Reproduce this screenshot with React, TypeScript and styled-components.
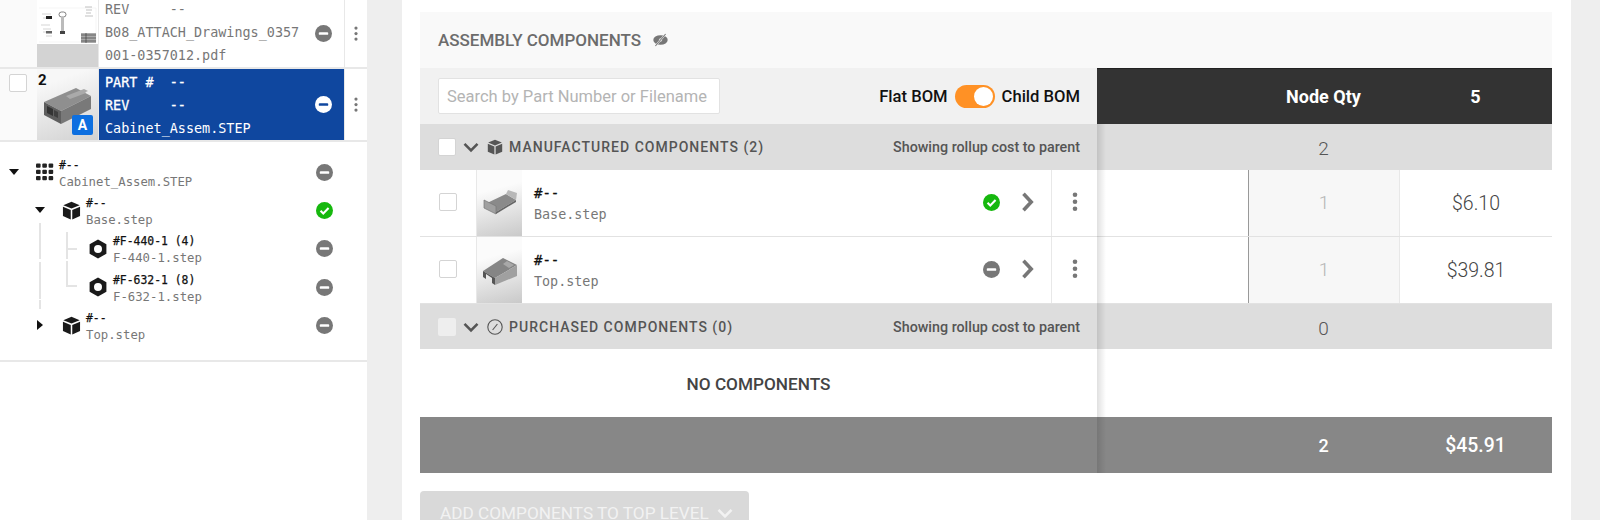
import React from "react";
import styled, { createGlobalStyle } from "styled-components";

const GlobalStyle = createGlobalStyle`
  html, body { margin: 0; padding: 0; background: #eeeeee; }
  body { font-family: "Roboto", "Liberation Sans", sans-serif; }
  * { box-sizing: border-box; }
`;

const MinusIcon = ({ size = 17, inverse = false }: { size?: number; inverse?: boolean }) => (
  <svg width={size} height={size} viewBox="0 0 18 18">
    <circle cx="9" cy="9" r="9" fill={inverse ? "#fff" : "#777"} />
    <rect x="4" y="7.6" width="10" height="2.8" rx="1" fill={inverse ? "#0f479f" : "#fff"} />
  </svg>
);

const CheckIcon = ({ size = 17 }: { size?: number }) => (
  <svg width={size} height={size} viewBox="0 0 18 18">
    <circle cx="9" cy="9" r="9" fill="#16b80e" />
    <path d="M4.8 9.2l2.9 2.9 5.6-5.8" fill="none" stroke="#fff" strokeWidth="2.2" />
  </svg>
);

const Kebab = ({ r = 1.7, gap = 6 }: { r?: number; gap?: number }) => (
  <svg width="8" height={gap * 2 + r * 2 + 1} viewBox={`0 0 8 ${gap * 2 + r * 2 + 1}`}>
    {[0, 1, 2].map((i) => (
      <circle key={i} cx="4" cy={r + 0.5 + i * gap} r={r} fill="#777" />
    ))}
  </svg>
);

const Caret = ({ right = false }: { right?: boolean }) => (
  <svg width="12" height="12" viewBox="0 0 12 12">
    <path d={right ? "M3 1l6 5-6 5z" : "M1 3h10l-5 6z"} fill="#111" />
  </svg>
);

const GridIcon = () => (
  <svg width="18" height="18" viewBox="0 0 18 18" fill="#222">
    {[0, 1, 2].flatMap((r) =>
      [0, 1, 2].map((c) => <rect key={`${r}${c}`} x={c * 6.3} y={r * 6.3 + 0.5} width="4.6" height="4.2" rx="1" />)
    )}
  </svg>
);

const CubeIcon = ({ size = 19, color = "#1a1a1a" }: { size?: number; color?: string }) => (
  <svg width={size} height={size} viewBox="0 0 20 20" fill={color}>
    <path d="M10 .8l8.6 3.6L10 8 1.4 4.4z" />
    <path d="M1 6l8.2 3.5V19.4L1 15.8z" />
    <path d="M19 6l-8.2 3.5V19.4L19 15.8z" />
  </svg>
);

const HexIcon = () => (
  <svg width="18" height="20" viewBox="0 0 18 20">
    <path
      fillRule="evenodd"
      d="M9 .5l8.4 4.8v9.4L9 19.5.6 14.7V5.3zM9 6a4 4 0 100 8 4 4 0 000-8z"
      fill="#1a1a1a"
    />
  </svg>
);

const EyeOff = () => (
  <svg width="15" height="14" viewBox="0 0 15 14">
    <ellipse cx="7.5" cy="7" rx="7.2" ry="4.8" fill="#777" />
    <circle cx="7.5" cy="7" r="1.7" fill="#cfcfcf" />
    <path d="M12.6 1L2.4 13" stroke="#f9f9f9" strokeWidth="1.9" />
    <path d="M12.6 1L2.4 13" stroke="#777" strokeWidth="1.1" />
  </svg>
);

const ChevronDown = ({ color = "#555" }: { color?: string }) => (
  <svg width="16" height="11" viewBox="0 0 16 11">
    <path d="M1.5 1.8L8 8.3l6.5-6.5" fill="none" stroke={color} strokeWidth="2.6" />
  </svg>
);

const ChevronRight = () => (
  <svg width="13" height="20" viewBox="0 0 13 20">
    <path d="M2.5 1.8L10.2 10l-7.7 8.2" fill="none" stroke="#777" strokeWidth="3.6" />
  </svg>
);

const DialIcon = () => (
  <svg width="16" height="16" viewBox="0 0 16 16">
    <circle cx="8" cy="8" r="7.2" fill="none" stroke="#555" strokeWidth="1.1" />
    <path d="M5.6 11l4.8-6" stroke="#555" strokeWidth="1.1" />
  </svg>
);

const BasePart = () => (
  <svg width="40" height="38" viewBox="0 0 40 38">
    <path d="M5 20L26 10l10 6-20 12z" fill="#8a8a8a" />
    <path d="M26 10l2-4 9 3-1 7z" fill="#b8b8b8" />
    <path d="M4 16l12 6v8L4 24z" fill="#a0a0a0" stroke="#777" strokeWidth=".7" />
    <path d="M16 28l20-12v2L16 30z" fill="#666" />
  </svg>
);

const TopPart = () => (
  <svg width="40" height="38" viewBox="0 0 40 38">
    <path d="M3 20L23 7l14 7-22 13z" fill="#858585" />
    <path d="M27 10l7 4-5 3-6-4z" fill="#a8a8a8" />
    <path d="M15 27l22-13v11L15 34z" fill="#a0a0a0" />
    <path d="M3 20l12 7v7l-3-2v-5l-6-4v5l-3-2z" fill="#555" />
  </svg>
);

const CabinetPart = () => (
  <svg width="50" height="38" viewBox="0 0 50 38">
    <path d="M1 15L33 1l15 8-30 15z" fill="#8f8f8f" />
    <path d="M23 9l18-7 4 2-18 8zM26 11l16-6 1 1-16 6z" fill="#aaa" />
    <path d="M1 15l17 9v13L1 28z" fill="#5e5e5e" />
    <path d="M18 24L48 9v13L18 37z" fill="#797979" />
    <path d="M4 19l6 3v7l-6-3z" fill="#333" />
    <path d="M11 23l4 2v6l-4-2z" fill="#3f3f3f" />
  </svg>
);

const DrawingSheet = () => (
  <svg width="60" height="42" viewBox="0 0 60 42">
    <g fill="none" strokeWidth=".6">
      <path d="M2 6h57v34H2" stroke="#eee" />
      <path d="M5 12h9M6 16h7M4 23h9M6 27h8M9 34h6M6 30h4" stroke="#bbb" />
      <rect x="9" y="14" width="6" height="3" fill="#222" stroke="none" />
      <rect x="9" y="29" width="6" height="2.5" fill="#666" stroke="none" />
      <rect x="22" y="10" width="7" height="5" rx="2.5" stroke="#333" />
      <path d="M25.5 15v15" stroke="#bbb" strokeWidth="3" />
      <rect x="23" y="29" width="5" height="3" fill="#444" stroke="none" />
      <path d="M48 5h7M49 8h6M49 11h5M48 14h8" stroke="#999" />
      <rect x="44" y="31" width="15" height="10" fill="#aaa" stroke="none" />
      <path d="M44 33h15M44 36h15M44 39h15M49 31v10" stroke="#333" />
    </g>
  </svg>
);

const Page = styled.div`
  display: flex;
  height: 520px;
  width: 1600px;
  overflow: hidden;
  background: #eeeeee;
`;

const LeftPanel = styled.aside`
  width: 367px;
  flex: none;
  height: 100%;
  background: #fff;
`;

const FileRow = styled.div<{ $height: number }>`
  display: flex;
  height: ${(p) => p.$height}px;
  border-bottom: 2px solid #e8e8e8;
`;

const CheckCell = styled.div`
  width: 37px;
  flex: none;
  background: #fafafa;
  padding: 5px 0 0 9px;
`;

const Box = styled.span<{ $disabled?: boolean }>`
  display: block;
  flex: none;
  width: 18px;
  height: 18px;
  background: ${(p) => (p.$disabled ? "#eeeeee" : "#fff")};
  border: ${(p) => (p.$disabled ? "none" : "1px solid #d4d4d4")};
  border-radius: 2px;
`;

const ThumbCell = styled.div`
  width: 61px;
  flex: none;
  position: relative;
  background: linear-gradient(160deg, #f7f7f7 20%, #d2d2d2 100%);
  display: flex;
  flex-direction: column;
`;

const SheetTop = styled.div`
  height: 44px;
  background: #fff;
  overflow: hidden;
  display: flex;
  align-items: flex-end;
`;

const SheetRest = styled.div`
  flex: 1;
  background: #d3d3d3;
`;

const RowNumber = styled.span`
  position: absolute;
  left: 1px;
  top: 2px;
  font: 700 15px "Roboto", sans-serif;
  color: #111;
`;

const ThumbPart = styled.div`
  padding: 18px 0 0 6px;
`;

const RevBadge = styled.span`
  position: absolute;
  right: 5px;
  bottom: 5px;
  width: 21px;
  height: 20px;
  border-radius: 2px;
  background: #0d6fe0;
  color: #fff;
  font: 700 14px/20px "Roboto", sans-serif;
  text-align: center;
`;

const InfoCell = styled.div<{ $active?: boolean }>`
  width: 246px;
  flex: none;
  display: flex;
  align-items: center;
  justify-content: space-between;
  padding: 0 12px 0 6px;
  background: ${(p) => (p.$active ? "#0f479f" : "#fff")};
  color: ${(p) => (p.$active ? "#fff" : "#777")};
  border-left: 1px solid #e8e8e8;
`;

const MonoLines = styled.div<{ $shift?: number }>`
  font-family: "DejaVu Sans Mono", "Liberation Mono", monospace;
  font-size: 13.45px;
  line-height: 22.7px;
  white-space: pre;
  padding-top: ${(p) => p.$shift ?? 0}px;
`;

const MonoStrong = styled.div`
  -webkit-text-stroke: 0.3px currentColor;
`;

const KebabCell = styled.div`
  flex: 1;
  display: flex;
  align-items: center;
  justify-content: center;
  border-left: 1px solid #e8e8e8;
`;

const Tree = styled.div`
  padding: 11px 0 0;
  height: 220px;
  border-bottom: 2px solid #e8e8e8;
`;

const TreeRow = styled.div<{ $depth: number }>`
  position: relative;
  display: flex;
  align-items: center;
  height: 38.3px;
  padding-left: ${(p) => [8, 34, 89][p.$depth]}px;
  padding-right: 34px;
`;

const CaretSlot = styled.span`
  width: 12px;
  margin-right: 16px;
  display: flex;
  flex: none;
`;

const TreeIcon = styled.span<{ $gap: number }>`
  display: flex;
  flex: none;
  margin-right: ${(p) => p.$gap}px;
`;

const TreeText = styled.div`
  flex: 1;
  padding-top: 3px;
  font-family: "DejaVu Sans Mono", "Liberation Mono", monospace;
  font-size: 12.3px;
  line-height: 17px;
  color: #777;
  white-space: pre;
`;

const TreeTitle = styled.div`
  color: #111;
  font-size: 11.4px;
  -webkit-text-stroke: 0.25px #111;
`;

const Guide = styled.i<{ $x: number; $top: number; $h: number; $w?: number }>`
  position: absolute;
  left: ${(p) => p.$x}px;
  top: ${(p) => p.$top}px;
  height: ${(p) => p.$h}px;
  width: ${(p) => p.$w ?? 2}px;
  background: #e4e4e4;
`;

const Main = styled.main`
  margin-left: 35px;
  width: 1169px;
  height: 100%;
  flex: none;
  background: #fff;
  padding: 12px 19px 0 18px;
`;

const SectionTitle = styled.div`
  height: 56px;
  background: #f9f9f9;
  padding-left: 18px;
  display: flex;
  align-items: center;
  gap: 12px;
  color: #6c6c6c;
  font-size: 17px;
  font-weight: 500;
`;

const Table = styled.div`
  position: relative;
`;

const FrozenShadow = styled.div`
  position: absolute;
  left: 677px;
  top: 56px;
  bottom: 0;
  width: 9px;
  background: linear-gradient(90deg, rgba(0, 0, 0, 0.12), rgba(0, 0, 0, 0));
  pointer-events: none;
`;

const TableRow = styled.div<{ $height: number; $bg?: string; $line?: string }>`
  display: grid;
  grid-template-columns: 677px 151px 151px 1fr;
  height: ${(p) => p.$height}px;
  background: ${(p) => p.$bg ?? "transparent"};
  border-bottom: ${(p) => (p.$line ? `1px solid ${p.$line}` : "none")};
`;

const Toolbar = styled.div`
  background: #f1f1f1;
  display: flex;
  align-items: center;
  padding: 0 17px 0 18px;
`;

const SearchInput = styled.input`
  width: 282px;
  height: 36px;
  border: 1px solid #e2e2e2;
  border-radius: 2px;
  background: #fff;
  padding: 0 8px;
  font: 400 16.5px "Roboto", sans-serif;
  color: #333;
  &::placeholder { color: #b4b4b4; opacity: 1; }
`;

const BomSwitch = styled.div`
  margin-left: auto;
  display: flex;
  align-items: center;
  gap: 7px;
  font-size: 16.6px;
  font-weight: 500;
  color: #111;
`;

const Toggle = styled.span`
  width: 40px;
  height: 23px;
  border-radius: 12px;
  background: #ff9125;
  display: flex;
  justify-content: flex-end;
  padding: 2px;
`;

const Knob = styled.span`
  width: 19px;
  height: 19px;
  border-radius: 50%;
  background: #fff;
`;

const HeadFill = styled.div`
  grid-column: 2 / -1;
  background: #333;
  border-top: 1px solid #222;
  display: grid;
  grid-template-columns: 151px 151px 1fr;
  align-items: center;
`;

const HeadLabel = styled.div<{ $col: number }>`
  grid-column: ${(p) => p.$col};
  text-align: center;
  color: #fff;
  font-size: 18px;
  font-weight: 700;
`;

const GroupLabel = styled.div<{ $shift?: number }>`
  display: flex;
  align-items: center;
  padding: ${(p) => p.$shift ?? 0}px 17px 0 18px;
`;

const GroupChevron = styled.span`
  display: flex;
  margin: 0 8px 0 7px;
`;

const GroupIcon = styled.span`
  display: flex;
  margin-right: 6px;
`;

const GroupName = styled.span`
  font-size: 14px;
  font-weight: 500;
  letter-spacing: 1.02px;
  color: #555;
  white-space: pre;
`;

const GroupNote = styled.span`
  margin-left: auto;
  font-size: 14.3px;
  font-weight: 500;
  color: #555;
`;

const GroupQty = styled.div`
  grid-column: 3;
  text-align: center;
  align-self: center;
  padding-top: 3px;
  font-size: 19px;
  font-weight: 300;
  color: #555;
`;

const PartCell = styled.div`
  display: flex;
  align-items: stretch;
`;

const PartCheck = styled.div`
  width: 56px;
  flex: none;
  display: flex;
  align-items: center;
  padding-left: 19px;
  padding-bottom: 2px;
`;

const PartThumb = styled.div`
  width: 46px;
  flex: none;
  display: flex;
  align-items: center;
  justify-content: center;
  border-left: 1px solid #e8e8e8;
  background: linear-gradient(165deg, #fbfbfb 30%, #c9c9c9 100%);
`;

const PartText = styled.div`
  flex: 1;
  padding: 2px 0 0 12px;
  align-self: center;
  font-family: "DejaVu Sans Mono", "Liberation Mono", monospace;
  font-size: 13.4px;
  line-height: 21.5px;
  color: #777;
`;

const PartTitle = styled.div`
  color: #111;
  font-size: 14px;
  -webkit-text-stroke: 0.3px #111;
`;

const PartStatus = styled.div`
  display: flex;
  align-items: center;
  gap: 21px;
  padding-right: 17px;
  padding-bottom: 2px;
`;

const PartMenu = styled.div`
  width: 46px;
  flex: none;
  display: flex;
  align-items: center;
  justify-content: center;
  padding-bottom: 2px;
  border-left: 1px solid #e8e8e8;
`;

const QtyCell = styled.div`
  grid-column: 3;
  display: flex;
  align-items: center;
  justify-content: center;
  padding-bottom: 2px;
  background: #f7f7f7;
  border-left: 1px solid #999;
  font-size: 19px;
  font-weight: 300;
  color: #b5b5b5;
`;

const PriceCell = styled.div`
  display: flex;
  align-items: center;
  justify-content: center;
  border-left: 1px solid #e8e8e8;
  font-size: 19.5px;
  font-weight: 300;
  color: #444;
`;

const EmptyNote = styled.div`
  display: flex;
  align-items: center;
  justify-content: center;
  padding-top: 1px;
  font-size: 17.2px;
  font-weight: 500;
  color: #444;
`;

const TotalCell = styled.div<{ $col: number; $size: number }>`
  grid-column: ${(p) => p.$col};
  align-self: center;
  text-align: center;
  padding-top: 1px;
  font-size: ${(p) => p.$size}px;
  font-weight: 500;
  color: #fff;
`;

const AddButton = styled.button`
  margin-top: 18px;
  width: 329px;
  height: 46px;
  border: none;
  border-radius: 4px;
  background: #d9d9d9;
  color: #f2f2f2;
  padding: 0 0 0 20px;
  display: flex;
  align-items: flex-start;
  gap: 8px;
  font: 400 17.2px/44px "Roboto", sans-serif;
  white-space: nowrap;
`;

const AddChevron = styled.span`
  display: flex;
  padding-top: 17px;
`;

const parts = [
  { title: "Base.step", art: <BasePart />, status: <CheckIcon />, qty: 1, price: "$6.10" },
  { title: "Top.step", art: <TopPart />, status: <MinusIcon />, qty: 1, price: "$39.81" },
];

const App = () => {
  return (
    <Page>
      <GlobalStyle />
      <LeftPanel>
        <FileRow $height={69}>
          <CheckCell />
          <ThumbCell>
            <SheetTop>
              <DrawingSheet />
            </SheetTop>
            <SheetRest />
          </ThumbCell>
          <InfoCell>
            <MonoLines>
              {"REV     --\nB08_ATTACH_Drawings_0357\n001-0357012.pdf"}
            </MonoLines>
            <MinusIcon />
          </InfoCell>
          <KebabCell>
            <Kebab r={1.6} gap={5.5} />
          </KebabCell>
        </FileRow>
        <FileRow $height={73}>
          <CheckCell>
            <Box />
          </CheckCell>
          <ThumbCell>
            <RowNumber>2</RowNumber>
            <ThumbPart>
              <CabinetPart />
            </ThumbPart>
            <RevBadge>A</RevBadge>
          </ThumbCell>
          <InfoCell $active>
            <MonoLines $shift={4}>
              <MonoStrong>{"PART #  --\nREV     --"}</MonoStrong>
              Cabinet_Assem.STEP
            </MonoLines>
            <MinusIcon inverse />
          </InfoCell>
          <KebabCell>
            <Kebab r={1.6} gap={5.5} />
          </KebabCell>
        </FileRow>
        <Tree>
          <TreeRow $depth={0}>
            <CaretSlot>
              <Caret />
            </CaretSlot>
            <TreeIcon $gap={5}>
              <GridIcon />
            </TreeIcon>
            <TreeText>
              <TreeTitle>#--</TreeTitle>
              Cabinet_Assem.STEP
            </TreeText>
            <MinusIcon />
          </TreeRow>
          <TreeRow $depth={1}>
            <CaretSlot>
              <Caret />
            </CaretSlot>
            <TreeIcon $gap={5}>
              <CubeIcon />
            </TreeIcon>
            <TreeText>
              <TreeTitle>#--</TreeTitle>
              Base.step
            </TreeText>
            <CheckIcon />
            <Guide $x={39} $top={32} $h={36} />
            <Guide $x={39} $top={71} $h={37} />
            <Guide $x={39} $top={109} $h={9} />
          </TreeRow>
          <TreeRow $depth={2}>
            <Guide $x={66} $top={2} $h={27} />
            <Guide $x={66} $top={18} $h={2} $w={11} />
            <TreeIcon $gap={6}>
              <HexIcon />
            </TreeIcon>
            <TreeText>
              <TreeTitle>#F-440-1 (4)</TreeTitle>
              F-440-1.step
            </TreeText>
            <MinusIcon />
          </TreeRow>
          <TreeRow $depth={2}>
            <Guide $x={66} $top={-7} $h={25} />
            <Guide $x={66} $top={17} $h={2} $w={11} />
            <TreeIcon $gap={6}>
              <HexIcon />
            </TreeIcon>
            <TreeText>
              <TreeTitle>#F-632-1 (8)</TreeTitle>
              F-632-1.step
            </TreeText>
            <MinusIcon />
          </TreeRow>
          <TreeRow $depth={1}>
            <CaretSlot>
              <Caret right />
            </CaretSlot>
            <TreeIcon $gap={5}>
              <CubeIcon />
            </TreeIcon>
            <TreeText>
              <TreeTitle>#--</TreeTitle>
              Top.step
            </TreeText>
            <MinusIcon />
          </TreeRow>
        </Tree>
      </LeftPanel>
      <Main>
        <SectionTitle>
          ASSEMBLY COMPONENTS
          <EyeOff />
        </SectionTitle>
        <Table>
          <TableRow $height={56}>
            <Toolbar>
              <SearchInput placeholder="Search by Part Number or Filename" />
              <BomSwitch>
                Flat BOM
                <Toggle>
                  <Knob />
                </Toggle>
                Child BOM
              </BomSwitch>
            </Toolbar>
            <HeadFill>
              <HeadLabel $col={2}>Node Qty</HeadLabel>
              <HeadLabel $col={3}>5</HeadLabel>
            </HeadFill>
          </TableRow>
          <TableRow $height={46} $bg="#dddddd">
            <GroupLabel>
              <Box />
              <GroupChevron>
                <ChevronDown />
              </GroupChevron>
              <GroupIcon>
                <CubeIcon size={16} color="#555" />
              </GroupIcon>
              <GroupName>MANUFACTURED COMPONENTS (2)</GroupName>
              <GroupNote>Showing rollup cost to parent</GroupNote>
            </GroupLabel>
            <GroupQty>2</GroupQty>
          </TableRow>
          {parts.map((part) => (
            <TableRow key={part.title} $height={67} $line="#e2e2e2">
              <PartCell>
                <PartCheck>
                  <Box />
                </PartCheck>
                <PartThumb>{part.art}</PartThumb>
                <PartText>
                  <PartTitle>#--</PartTitle>
                  {part.title}
                </PartText>
                <PartStatus>
                  {part.status}
                  <ChevronRight />
                </PartStatus>
                <PartMenu>
                  <Kebab r={2.3} gap={7} />
                </PartMenu>
              </PartCell>
              <QtyCell>{part.qty}</QtyCell>
              <PriceCell>{part.price}</PriceCell>
            </TableRow>
          ))}
          <TableRow $height={45} $bg="#dddddd">
            <GroupLabel $shift={1}>
              <Box $disabled />
              <GroupChevron>
                <ChevronDown />
              </GroupChevron>
              <GroupIcon>
                <DialIcon />
              </GroupIcon>
              <GroupName>PURCHASED COMPONENTS (0)</GroupName>
              <GroupNote>Showing rollup cost to parent</GroupNote>
            </GroupLabel>
            <GroupQty>0</GroupQty>
          </TableRow>
          <TableRow $height={68}>
            <EmptyNote>NO COMPONENTS</EmptyNote>
          </TableRow>
          <TableRow $height={56} $bg="#878787">
            <TotalCell $col={3} $size={18}>2</TotalCell>
            <TotalCell $col={4} $size={19.4}>$45.91</TotalCell>
          </TableRow>
          <FrozenShadow />
        </Table>
        <AddButton>
          ADD COMPONENTS TO TOP LEVEL
          <AddChevron>
            <ChevronDown color="#f2f2f2" />
          </AddChevron>
        </AddButton>
      </Main>
    </Page>
  );
};

export default App;
